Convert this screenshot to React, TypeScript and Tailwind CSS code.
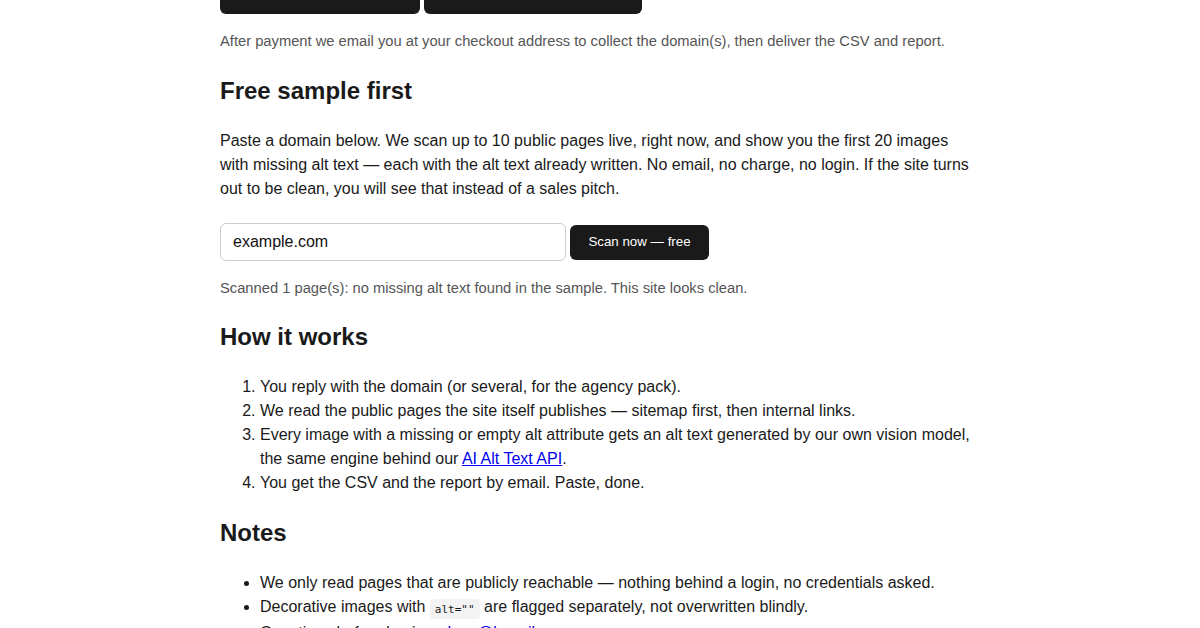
import React from "react";

const howSteps: React.ReactNode[] = [
  "You reply with the domain (or several, for the agency pack).",
  "We read the public pages the site itself publishes — sitemap first, then internal links.",
  <>
    Every image with a missing or empty alt attribute gets an alt text generated by our own vision model,
    the same engine behind our{" "}
    <a href="#" className="text-[#0000ee] underline">
      AI Alt Text API
    </a>
    .
  </>,
  "You get the CSV and the report by email. Paste, done.",
];

export default function App() {
  return (
    <div className="min-h-screen bg-white font-['Liberation_Sans',Arial,sans-serif] text-[#1a1a1a] overflow-hidden">
      <main className="mx-auto w-[760px] -mt-[29px]">
        <div className="flex gap-1">
          <a
            href="#"
            className="flex h-[43px] w-[200px] items-center justify-center rounded-md bg-[#1a1a1a] text-[15px] font-bold text-white"
          >
            Buy single site — $49
          </a>
          <a
            href="#"
            className="flex h-[43px] w-[218px] items-center justify-center rounded-md bg-[#1a1a1a] text-[15px] font-bold text-white"
          >
            Buy agency pack — $149
          </a>
        </div>

        <p className="mt-[16px] text-[14.72px] leading-[22px] text-[#555]">
          After payment we email you at your checkout address to collect the domain(s), then deliver the CSV and report.
        </p>

        <h2 className="mt-[24px] text-[24px] font-bold leading-[30px]">Free sample first</h2>

        <p className="mt-[23px] text-[16px] leading-[24px]">
          Paste a domain below. We scan up to 10 public pages live, right now, and show you the first 20 images
          with missing alt text — each with the alt text already written. No email, no charge, no login. If the site turns
          out to be clean, you will see that instead of a sales pitch.
        </p>

        <form className="mt-[22px] flex items-center gap-1" onSubmit={(e) => e.preventDefault()}>
          <input
            type="text"
            defaultValue="example.com"
            className="h-[38px] w-[346px] rounded-md border border-[#ccc] px-3 text-[16px] text-[#111] outline-none"
          />
          <button
            type="submit"
            className="h-[35px] w-[139px] rounded-md bg-[#1a1a1a] text-[13.33px] text-white"
          >
            Scan now — free
          </button>
        </form>

        <p className="mt-[16px] text-[14.72px] leading-[22px] text-[#555]">
          Scanned 1 page(s): no missing alt text found in the sample. This site looks clean.
        </p>

        <h2 className="mt-[23px] text-[24px] font-bold leading-[30px]">How it works</h2>

        <ol className="mt-[23px] list-decimal pl-10 text-[16px] leading-[24px]">
          {howSteps.map((step, i) => (
            <li key={i}>{step}</li>
          ))}
        </ol>

        <h2 className="mt-[23px] text-[24px] font-bold leading-[30px]">Notes</h2>

        <ul className="mt-[23px] list-disc pl-10 text-[16px] leading-[24px]">
          <li>We only read pages that are publicly reachable — nothing behind a login, no credentials asked.</li>
          <li>
            Decorative images with{" "}
            <code className="rounded bg-[#f3f3f3] px-[5px] py-[3.5px] font-['DejaVu_Sans_Mono',monospace] text-[11px]">
              alt=""
            </code>{" "}
            are flagged separately, not overwritten blindly.
          </li>
          <li>
            Questions before buying:{" "}
            <a href="#" className="text-[#0000ee] underline">
              dave@lumpike.com
            </a>
          </li>
        </ul>
      </main>
    </div>
  );
}
